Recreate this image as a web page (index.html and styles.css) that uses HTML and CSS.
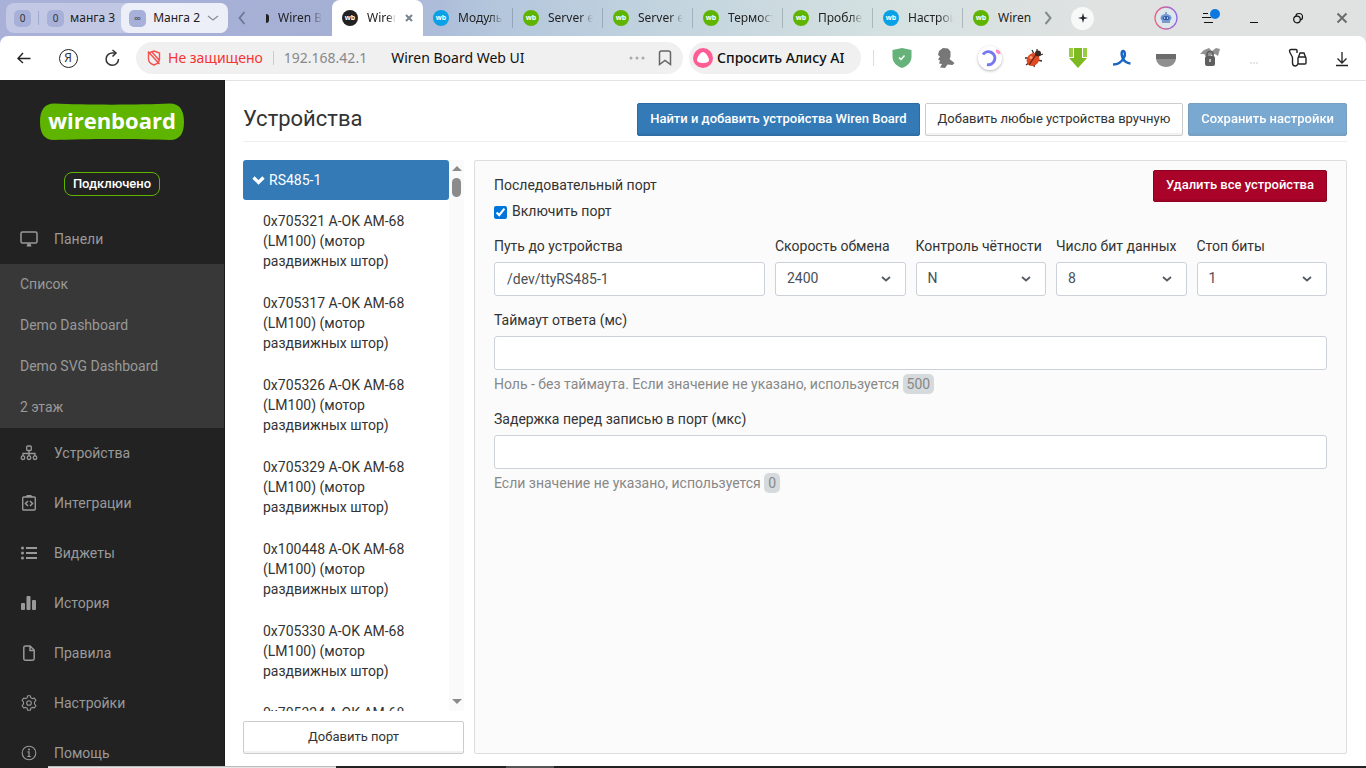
FILE: index.html
```html
<!DOCTYPE html>
<html lang="ru">
  <head>
    <meta charset="utf-8">
    <title>Wiren Board Web UI</title>
    <link rel="stylesheet" href="styles.css">
  </head>
  <body>
    <header class="browser">
      <div class="tabstrip">
        <div class="tab-groups">
          <button class="group-count" aria-label="Группа">0</button>
          <span class="group-divider"></span>
          <button class="group"><span class="group-count">0</span>манга 3</button>
          <button class="group group-open">
            <span class="group-count">∞</span>Манга 2
            <svg width="12" height="8" viewBox="0 0 12 8"><path d="M1 2l5 4 5-4" fill="none" stroke="#8b8e99" stroke-width="1.3"/></svg>
          </button>
        </div>
        <button class="strip-arrow" aria-label="Назад по вкладкам">
          <svg width="8" height="14" viewBox="0 0 8 14"><path d="M6.500 1L1.500 7l5 6" fill="none" stroke="#6e7596" stroke-width="1.8"/></svg>
        </button>
        <nav class="tabs">
          <a class="tab tab-cut" href="#"><span class="half-icon"></span><span class="tab-text">Wiren Bo</span></a>
          <a class="tab tab-active" href="#">
            <span class="wb wb-black">wb</span><span class="tab-text">Wiren</span>
            <svg width="8" height="8" viewBox="0 0 8 8"><path d="M1 1l6 6M7 1L1 7" stroke="#77838f" stroke-width="2"/></svg>
          </a>
          <a class="tab" href="#"><span class="wb wb-blue">wb</span><span class="tab-text">Модуль</span></a>
          <a class="tab" href="#"><span class="wb">wb</span><span class="tab-text">Server e</span></a>
          <a class="tab" href="#"><span class="wb">wb</span><span class="tab-text">Server e</span></a>
          <a class="tab" href="#"><span class="wb">wb</span><span class="tab-text">Термост</span></a>
          <a class="tab" href="#"><span class="wb">wb</span><span class="tab-text">Пробле</span></a>
          <a class="tab" href="#"><span class="wb wb-blue">wb</span><span class="tab-text">Настрой</span></a>
          <a class="tab tab-last" href="#"><span class="wb">wb</span><span class="tab-text">Wiren</span></a>
        </nav>
        <button class="strip-arrow" aria-label="Вперёд по вкладкам">
          <svg width="8" height="14" viewBox="0 0 8 14"><path d="M1.500 1l5 6-5 6" fill="none" stroke="#858b8d" stroke-width="2"/></svg>
        </button>
        <button class="new-tab" aria-label="Новая вкладка">
          <svg width="12" height="12" viewBox="0 0 12 12"><path d="M6 1l1.100 4L11 6 7.100 7.100 6 11 4.900 7.100 1 6l3.900-1.100z" fill="#20262b"/></svg>
        </button>
        <div class="window-buttons">
          <button class="cell" aria-label="Профиль">
            <svg width="24" height="24" viewBox="0 0 24 24">
              <defs><linearGradient id="ring"><stop offset="0" stop-color="#f0607c"/><stop offset="1" stop-color="#8f6ae8"/></linearGradient></defs>
              <circle cx="12" cy="12" r="11" fill="#dce8ec" stroke="url(#ring)" stroke-width="1.3"/>
              <path d="M11.500 6h1v3h-1z" fill="#4d608d"/>
              <ellipse cx="12" cy="12" rx="5.500" ry="4" fill="#7398d2"/>
              <ellipse cx="12" cy="12" rx="3.500" ry="2" fill="#2a5ba9"/>
              <path d="M8 15h8v2H8z" fill="#8297c5"/>
              <circle cx="10.500" cy="12" r="0.700" fill="#fff"/><circle cx="13.500" cy="12" r="0.700" fill="#fff"/>
            </svg>
          </button>
          <button class="cell" aria-label="Меню">
            <svg width="22" height="22" viewBox="0 0 22 22">
              <path d="M4 6.500h5M3 10.500h9M5 15.500h9" stroke="#111" stroke-width="1"/>
              <circle cx="16" cy="7" r="5" fill="#0a78e0"/>
            </svg>
          </button>
          <button class="cell" aria-label="Свернуть">
            <svg width="12" height="14" viewBox="0 0 12 14"><path d="M2 11.500h8" stroke="#111"/></svg>
          </button>
          <button class="cell" aria-label="Развернуть">
            <svg width="12" height="12" viewBox="0 0 12 12"><circle cx="5" cy="7.500" r="3.300" fill="none" stroke="#111" stroke-width="1.200"/><path d="M4 4c0-2 1-2.500 3-2.500 3 0 3.500 1 3.500 3.500 0 2-.500 3-2.500 3" fill="none" stroke="#111" stroke-width="1.200"/></svg>
          </button>
          <button class="cell" aria-label="Закрыть">
            <svg width="12" height="12" viewBox="0 0 12 12"><path d="M1.500 1.500l9 9M10.500 1.500l-9 9" stroke="#6b6c6c" stroke-width="2"/></svg>
          </button>
        </div>
      </div>

      <div class="toolbar">
        <button class="cell" aria-label="Назад">
          <svg width="14" height="12" viewBox="0 0 14 12"><path d="M13.500 6.500H1M6 1L1 6.500 6 11" fill="none" stroke="#222" stroke-width="1.400"/></svg>
        </button>
        <button class="cell" aria-label="Яндекс"><span class="ya">Я</span></button>
        <button class="cell" aria-label="Обновить">
          <svg width="16" height="18" viewBox="0 0 16 18"><path d="M14.500 10A6.200 6.200 0 1 1 9 4h2.500" fill="none" stroke="#333" stroke-width="1.500"/><path d="M8.500 1l3.500 3-3.500 3.500" fill="none" stroke="#333" stroke-width="1.500"/></svg>
        </button>
        <div class="address">
          <svg width="14" height="16" viewBox="0 0 14 16"><path d="M7 1l5.500 2v6c0 3-2.500 5-5.500 6-3-1-5.500-3-5.500-6V3zM1 1.500L12.500 14M5 2l7 8" fill="none" stroke="#f4504c" stroke-width="1.400"/></svg>
          <span class="insecure">Не защищено</span>
          <span class="address-divider"></span>
          <span class="host">192.168.42.1</span>
          <span class="page-name">Wiren Board Web UI</span>
          <button class="plain dots" aria-label="Ещё"><svg width="16" height="4" viewBox="0 0 16 4"><g fill="#a9a9a9"><circle cx="2" cy="2" r="1.500"/><circle cx="8" cy="2" r="1.500"/><circle cx="14" cy="2" r="1.500"/></g></svg></button>
          <button class="plain" aria-label="В закладки"><svg width="14" height="16" viewBox="0 0 14 16"><path d="M3.500 1h7c1 0 2 1 2 2v11.500L7 10.500l-5.500 4V3c0-1 1-2 2-2z" fill="none" stroke="#666" stroke-width="1.500"/></svg></button>
        </div>
        <button class="alice">
          <svg width="20" height="20" viewBox="0 0 20 20"><circle cx="10" cy="10" r="10" fill="#ff5c95"/><path d="M10 4c2.500 0 6 5.500 6 8 0 2.300-3 3-6 3s-6-.700-6-3c0-2.500 3.500-8 6-8z" fill="#fff"/></svg>
          Спросить Алису AI
        </button>
        <span class="toolbar-divider"></span>
        <div class="extensions">
          <button class="cell" aria-label="Protect">
            <svg width="20" height="20" viewBox="0 0 20 20"><path d="M10 0l9.500 2v7c0 5-4 9-9.500 11C4.500 18 .500 14 .500 9V2z" fill="#66b27a"/><path d="M7 9.500l2 2 3.500-4" fill="none" stroke="#fff" stroke-width="1.500"/></svg>
          </button>
          <button class="cell" aria-label="Расширение">
            <svg width="18" height="20" viewBox="0 0 18 20"><path d="M2 3l4-3 5 .500 2.500 3V9l-1 2 5 4-2 2-5-.500L8 20l-5-.500 2-3.500-3-.500 1-3-2-1 2-3-2-1.500z" fill="#777"/></svg>
          </button>
          <button class="cell" aria-label="Переводчик">
            <svg class="round" width="24" height="24" viewBox="0 0 24 24"><circle cx="12" cy="12" r="12" fill="#fff"/><path d="M5 8.500A6.500 6.500 0 1 1 9 18.500" fill="none" stroke="#7478f2" stroke-width="3"/><path d="M18 5c1.500 0 3 1 3.500 3" fill="none" stroke="#ff8cc4" stroke-width="3"/></svg>
          </button>
          <button class="cell" aria-label="Отладка">
            <svg width="20" height="20" viewBox="0 0 20 20"><path d="M1 10h5M2 17l4-3M8 2l2 4M13 1v5M19 6l-5 2M18 13l-5-1M10 19l1-5" stroke="#333" stroke-width="1.300"/><ellipse cx="9" cy="11.500" rx="6" ry="7" transform="rotate(40 9 11.500)" fill="#dd4b25"/><path d="M13 5L5 17" stroke="#6a1d10" stroke-width="1.200"/><circle cx="14" cy="5.500" r="3" fill="#3a2a24"/><circle cx="7" cy="9.500" r="1.500" fill="#f5a274"/></svg>
          </button>
          <button class="cell" aria-label="Скачать с сайта">
            <svg width="20" height="20" viewBox="0 0 20 20"><path d="M1 0h4v9H1zM15 0h4v9h-4z" fill="#9acb45"/><path d="M6 0h8v10h5l-9 10L1 10h5z" fill="#7db920"/></svg>
          </button>
          <button class="cell" aria-label="Лента">
            <svg width="20" height="18" viewBox="0 0 20 18"><path d="M1 15.500c6 0 9-3 11-7 1.500-3 1-6-.500-6.500-2-.300-2.500 3-1 6.500 1 3 4 6 8 6" fill="none" stroke="#1966c6" stroke-width="2.500"/></svg>
          </button>
          <button class="cell" aria-label="Pocket">
            <svg width="20" height="20" viewBox="0 0 20 20"><path d="M0 6h20v4c0 5-4.500 9-10 9S0 15 0 10z" fill="#8f8f8f"/><path d="M0 6h20v5H0z" fill="#6c6c6c"/></svg>
          </button>
          <button class="cell" aria-label="Блокировка">
            <svg width="20" height="20" viewBox="0 0 20 20"><path d="M0 6l4-4 5-2 3 3 4-3 4 1-2 7-3-2-3 1-5 3-3-4z" fill="#929292"/><rect x="5" y="8" width="10" height="10" rx="2" fill="#5f5f5f"/><path d="M7 10V6.500C7 2.500 13 2.500 13 6.500V10" fill="none" stroke="#5f5f5f" stroke-width="1.600"/><path d="M10 11v3" stroke="#ddd" stroke-width="1.500"/></svg>
          </button>
          <button class="cell" aria-label="Ещё расширения">
            <svg width="10" height="14" viewBox="0 0 10 14"><g fill="#ddd"><circle cx="2" cy="12" r="1"/><circle cx="5" cy="12" r="1"/><circle cx="8" cy="12" r="1"/></g></svg>
          </button>
          <button class="cell" aria-label="Коллекции">
            <svg width="20" height="20" viewBox="0 0 20 20"><path d="M9 5V2.500C9 2 8.500 1.500 8 1.500H3c-1 0-1.500.500-1.500 1.500 0 2 3 5 3 7v5c0 2 1 3 3 3 1.500 0 2-1 2.500-2.500" fill="none" stroke="#222" stroke-width="1.400"/><rect x="10" y="9" width="8" height="7" rx="1" fill="none" stroke="#222" stroke-width="1.400"/><path d="M10.500 9l1.500-4h4l1.500 4" fill="none" stroke="#222" stroke-width="1.400"/></svg>
          </button>
          <button class="cell" aria-label="Загрузки">
            <svg width="12" height="18" viewBox="0 0 12 18"><path d="M6 3v10.500M1.500 9.500L6 14l4.500-4.500M0 16.500h12" fill="none" stroke="#222" stroke-width="1.300"/></svg>
          </button>
        </div>
      </div>
    </header>

    <div class="app">
      <aside class="sidebar">
        <a class="logo" href="#">
          <svg width="144" height="38" viewBox="0 0 144 38" role="img" aria-label="wirenboard">
            <path d="M14 .500C45 2 99 2 130 .500c9 0 14 6 14 18.500s-5 18-14 18C99 35.500 45 35.500 14 37 5 37 0 31.500 0 19S5 .500 14 .500z" fill="#5fb400"/>
            <text class="logo-text" x="72" y="26" text-anchor="middle">wirenboard</text>
          </svg>
        </a>
        <span class="status">Подключено</span>
        <nav class="menu">
          <a class="menu-item" href="#">
            <svg width="18" height="16" viewBox="0 0 18 16"><rect x="1" y="1" width="16" height="11" rx="1.500" fill="none" stroke="#999" stroke-width="1.500"/><path d="M6.500 15.500l1-3h3l1 3z" fill="#999"/></svg>
            Панели
          </a>
          <div class="submenu">
            <a href="#">Список</a>
            <a href="#">Demo Dashboard</a>
            <a href="#">Demo SVG Dashboard</a>
            <a href="#">2 этаж</a>
          </div>
          <a class="menu-item" href="#">
            <svg width="18" height="16" viewBox="0 0 18 16"><g fill="none" stroke="#999" stroke-width="1.300"><rect x="6.700" y="1" width="4.600" height="4.500" rx="1"/><path d="M9 5.500V11M3 11V8.500h12V11"/><circle cx="3" cy="12.700" r="1.800"/><circle cx="9" cy="12.700" r="1.800"/><circle cx="15" cy="12.700" r="1.800"/></g></svg>
            Устройства
          </a>
          <a class="menu-item" href="#">
            <svg width="18" height="16" viewBox="0 0 18 16"><rect x="2.700" y="2" width="12.600" height="13" rx="1" fill="none" stroke="#999" stroke-width="1.400"/><path d="M5 2l2-2h4l2 2z" fill="#999"/><path d="M8 6L5.500 8.500 8 11M10 6l2.500 2.500L10 11" fill="none" stroke="#999" stroke-width="1.500"/></svg>
            Интеграции
          </a>
          <a class="menu-item" href="#">
            <svg width="18" height="16" viewBox="0 0 18 16"><g fill="#999"><circle cx="2.500" cy="3" r="1.500"/><circle cx="2.500" cy="8" r="1.500"/><circle cx="2.500" cy="13" r="1.500"/></g><path d="M6 3h11M6 8h11M6 13h11" stroke="#999" stroke-width="2"/></svg>
            Виджеты
          </a>
          <a class="menu-item" href="#">
            <svg width="18" height="16" viewBox="0 0 18 16"><g fill="#999"><rect x="1" y="8" width="4" height="7" rx="1"/><rect x="6.500" y="1" width="4" height="14" rx="1"/><rect x="12" y="5" width="4" height="10" rx="1"/></g></svg>
            История
          </a>
          <a class="menu-item" href="#">
            <svg width="18" height="16" viewBox="0 0 18 16"><path d="M5.500 1H10l4.200 4v8.500c0 1-.700 1.700-1.700 1.700h-7c-1 0-1.700-.700-1.700-1.700v-11C3.800 1.500 4.500 1 5.500 1zM10 1v4.500h4" fill="none" stroke="#999" stroke-width="1.500"/></svg>
            Правила
          </a>
          <a class="menu-item" href="#">
            <svg width="18" height="16" viewBox="0 0 16 16" fill="none" stroke="#999" stroke-width="1.100"><circle cx="8" cy="8" r="2.300"/><path d="M6.700.700h2.600l.500 2 1.500.900 2-.600 1.600 2.400L13.500 7v2l1.400 1.600-1.600 2.400-2-.600-1.500.900-.500 2H6.700l-.500-2-1.500-.900-2 .600-1.600-2.400L2.500 9V7L1.100 5.400 2.700 3l2 .600 1.500-.900z" stroke-linejoin="round"/></svg>
            Настройки
          </a>
          <a class="menu-item" href="#">
            <svg width="18" height="16" viewBox="0 0 18 16"><circle cx="9" cy="8" r="6.800" fill="none" stroke="#999" stroke-width="1.100"/><path d="M7.500 6.800H9v4.500M7.300 11.500h3.500" fill="none" stroke="#999" stroke-width="1.200"/><circle cx="9" cy="4.500" r="1" fill="#999"/></svg>
            Помощь
          </a>
        </nav>
      </aside>

      <main class="content">
        <div class="page-header">
          <h1>Устройства</h1>
          <div class="actions">
            <button class="btn btn-primary">Найти и добавить устройства Wiren Board</button>
            <button class="btn">Добавить любые устройства вручную</button>
            <button class="btn btn-primary" disabled>Сохранить настройки</button>
          </div>
        </div>

        <div class="columns">
          <section class="ports">
            <div class="port-scroll">
              <ul class="port-list">
                <li class="port">
                  <svg width="13" height="9" viewBox="0 0 13 9"><path d="M1.500 1.500l5 5 5-5" fill="none" stroke="#fff" stroke-width="3.200"/></svg>
                  RS485-1
                </li>
                <li>0x705321 A-OK AM-68 (LM100) (мотор раздвижных штор)</li>
                <li>0x705317 A-OK AM-68 (LM100) (мотор раздвижных штор)</li>
                <li>0x705326 A-OK AM-68 (LM100) (мотор раздвижных штор)</li>
                <li>0x705329 A-OK AM-68 (LM100) (мотор раздвижных штор)</li>
                <li>0x100448 A-OK AM-68 (LM100) (мотор раздвижных штор)</li>
                <li>0x705330 A-OK AM-68 (LM100) (мотор раздвижных штор)</li>
                <li>0x705324 A-OK AM-68</li>
              </ul>
              <div class="scrollbar">
                <svg width="10" height="5" viewBox="0 0 10 5"><path d="M0 5l5-5 5 5z" fill="#8b8b8b"/></svg>
                <span class="thumb"></span>
                <svg width="10" height="5" viewBox="0 0 10 5"><path d="M0 0l5 5 5-5z" fill="#8b8b8b"/></svg>
              </div>
            </div>
            <button class="btn">Добавить порт</button>
          </section>

          <form class="panel">
            <div class="panel-head">
              <div>
                <h2>Последовательный порт</h2>
                <label class="check"><input type="checkbox" checked>Включить порт</label>
              </div>
              <button type="button" class="btn btn-danger">Удалить все устройства</button>
            </div>

            <div class="params">
              <div class="field field-wide">
                <label for="path">Путь до устройства</label>
                <input class="control" type="text" id="path" value="/dev/ttyRS485-1">
              </div>
              <div class="field">
                <label for="baud">Скорость обмена</label>
                <div class="select">
                  <select class="control" id="baud"><option>2400</option><option>9600</option></select>
                  <svg width="10" height="6" viewBox="0 0 10 6"><path d="M1 1l4 3.500L9 1" fill="none" stroke="#555b63" stroke-width="1.800"/></svg>
                </div>
              </div>
              <div class="field">
                <label for="parity">Контроль чётности</label>
                <div class="select">
                  <select class="control" id="parity"><option>N</option><option>E</option><option>O</option></select>
                  <svg width="10" height="6" viewBox="0 0 10 6"><path d="M1 1l4 3.500L9 1" fill="none" stroke="#555b63" stroke-width="1.800"/></svg>
                </div>
              </div>
              <div class="field">
                <label for="bits">Число бит данных</label>
                <div class="select">
                  <select class="control" id="bits"><option>8</option><option>7</option></select>
                  <svg width="10" height="6" viewBox="0 0 10 6"><path d="M1 1l4 3.500L9 1" fill="none" stroke="#555b63" stroke-width="1.800"/></svg>
                </div>
              </div>
              <div class="field">
                <label for="stop">Стоп биты</label>
                <div class="select">
                  <select class="control" id="stop"><option>1</option><option>2</option></select>
                  <svg width="10" height="6" viewBox="0 0 10 6"><path d="M1 1l4 3.500L9 1" fill="none" stroke="#555b63" stroke-width="1.800"/></svg>
                </div>
              </div>
            </div>

            <div class="field">
              <label for="timeout">Таймаут ответа (мс)</label>
              <input class="control" type="text" id="timeout">
              <p class="hint">Ноль - без таймаута. Если значение не указано, используется <span class="default">500</span></p>
            </div>
            <div class="field">
              <label for="delay">Задержка перед записью в порт (мкс)</label>
              <input class="control" type="text" id="delay">
              <p class="hint">Если значение не указано, используется <span class="default">0</span></p>
            </div>
          </form>
        </div>
      </main>
    </div>

    <footer class="taskbar">
      <span class="task-start"></span>
      <span class="task-status"></span>
      <span class="task-gap"></span>
      <span class="task-app"></span>
    </footer>
  </body>
</html>
```

FILE: styles.css
```css
* {
  box-sizing: border-box;
}

body {
  margin: 0;
  height: 100vh;
  display: flex;
  flex-direction: column;
  overflow: hidden;
  font-family: Roboto, "Liberation Sans", sans-serif;
  font-size: 14px;
  line-height: 20px;
  color: #333;
  background: #fff;
}

button {
  font: inherit;
  color: inherit;
  cursor: pointer;
}

a {
  color: inherit;
  text-decoration: none;
}

svg {
  display: block;
  flex: none;
}

/* browser */

.browser {
  font-family: "Noto Sans", "Open Sans", sans-serif;
  background: linear-gradient(90deg, #a9b1d8 0, #a5b0d5 26%, #b3c6dc 36%, #c4d5df 50%, #d5e1e1 65%, #e0e2e1 82%, #e0e2e1 100%);
}

.browser button {
  border: 0;
  padding: 0;
  background: none;
}

.tabstrip {
  display: flex;
  align-items: center;
  height: 36px;
  padding: 0 2px 0 6px;
  font-size: 12px;
  line-height: 16px;
  color: #222;
}

.tab-groups {
  display: flex;
  align-items: center;
  width: 222px;
  height: 30px;
  padding-left: 8px;
  border-radius: 8px;
  background: rgba(255, 255, 255, 0.3);
}

.tabstrip .group-count {
  width: 17px;
  height: 17px;
  border-radius: 5px;
  background: #a7b0d8;
  font-size: 10px;
  text-align: center;
  color: #333;
}

.group-divider {
  width: 1px;
  height: 14px;
  margin: 0 8px 0 7px;
  background: #9daad4;
}

.group {
  display: flex;
  align-items: center;
  gap: 6px;
  height: 30px;
}

.browser .group-open {
  gap: 7px;
  margin-left: auto;
  padding: 0 9px 0 8px;
  border-radius: 8px;
  background: #eceef8;
}

.strip-arrow {
  width: 28px;
  display: flex;
  justify-content: center;
}

.tabs {
  display: flex;
  align-self: stretch;
}

.tab {
  display: flex;
  align-items: center;
  gap: 9px;
  width: 90px;
  padding: 0 10px;
  background: linear-gradient(rgba(70, 90, 110, 0.3), rgba(70, 90, 110, 0.3)) right center / 1px 20px no-repeat;
}

.tab-text {
  flex: 1;
  overflow: hidden;
  white-space: nowrap;
  -webkit-mask-image: linear-gradient(90deg, #000 70%, transparent 100%);
  mask-image: linear-gradient(90deg, #000 70%, transparent 100%);
}

.tab-cut {
  width: 76px;
  background: none;
}

.half-icon {
  width: 3px;
  height: 9px;
  border-radius: 0 5px 5px 0;
  background: #222;
}

.tab-active {
  width: 91px;
  border-radius: 8px 8px 0 0;
  background: #fff;
}

.tab-last {
  width: 71px;
  padding-right: 0;
  background: none;
}

.tab-last .tab-text {
  -webkit-mask-image: none;
  mask-image: none;
}

.wb {
  flex: none;
  width: 16px;
  height: 16px;
  border-radius: 50%;
  background: #5fb400;
  color: #fff;
  font-size: 7px;
  font-weight: 700;
  line-height: 15px;
  text-align: center;
}

.wb-blue {
  background: #0aa0e6;
}

.wb-black {
  background: #222;
}

.browser .new-tab {
  width: 23px;
  height: 23px;
  margin-left: 9px;
  display: grid;
  place-items: center;
  border-radius: 50%;
  background: #f7f8f8;
}

.window-buttons {
  display: flex;
  margin-left: auto;
}

.cell {
  width: 44px;
  height: 36px;
  display: grid;
  place-items: center;
}

.toolbar {
  display: flex;
  align-items: center;
  height: 44px;
  padding: 0 2px;
  border-radius: 8px 8px 0 0;
  background: #fff;
}

.ya {
  width: 19px;
  height: 19px;
  border: 1px solid #222;
  border-radius: 50%;
  font-size: 12px;
  line-height: 16px;
}

.address {
  flex: 1;
  display: flex;
  align-items: center;
  height: 32px;
  margin: 0 6px 0 2px;
  padding: 0 11px;
  border-radius: 16px;
  background: #f0f0f0;
  white-space: nowrap;
  color: #111;
}

.insecure {
  margin-left: 7px;
  color: #f63431;
}

.address-divider {
  width: 1px;
  height: 14px;
  margin: 0 10px;
  background: #ccc;
}

.host {
  color: #888;
}

.page-name {
  margin-left: 24px;
}

.dots {
  margin: 0 13px 0 auto;
}

.browser .alice {
  display: flex;
  align-items: center;
  gap: 4px;
  width: 172px;
  height: 32px;
  padding-left: 4px;
  border-radius: 16px;
  background: #f0f0f0;
  font-weight: 500;
  white-space: nowrap;
  color: #111;
}

.toolbar-divider {
  width: 1px;
  height: 16px;
  margin: 0 6px 0 12px;
  background: #ddd;
}

.extensions {
  display: flex;
}

.round {
  border-radius: 50%;
  box-shadow: 0 1px 3px rgba(0, 0, 0, 0.3);
}

/* app */

.app {
  flex: 1;
  display: flex;
  min-height: 0;
}

.sidebar {
  flex: none;
  width: 225px;
  overflow: hidden;
  background: #222;
  border-right: 1px solid #1a1a1a;
  color: #999;
  text-align: center;
}

.logo {
  display: flex;
  justify-content: center;
  padding: 23px 0 31px;
}

.logo-text {
  font-family: "Open Sans", sans-serif;
  font-size: 22px;
  font-weight: 700;
  fill: #fff;
}

.status {
  display: inline-block;
  padding: 1px 8px;
  border: 1px solid #5fb400;
  border-radius: 8px;
  font-size: 13px;
  font-weight: 500;
  color: #fff;
}

.menu {
  margin-top: 18px;
  text-align: left;
}

.menu-item {
  display: flex;
  align-items: center;
  gap: 16px;
  height: 50px;
  padding: 0 20px;
}

.submenu {
  background: #383838;
}

.submenu a {
  display: block;
  padding: 10px 20px 11px;
}

.content {
  flex: 1;
  min-width: 0;
  display: flex;
  flex-direction: column;
  padding: 22px 19px 12px 18px;
  border-top: 1px solid #e3e3e3;
}

.page-header {
  display: flex;
  justify-content: space-between;
  padding-bottom: 5px;
  border-bottom: 1px solid #eee;
}

h1 {
  margin: 0;
  font-size: 22px;
  font-weight: 400;
  line-height: 32px;
}

.actions {
  display: flex;
  gap: 5px;
}

.btn {
  height: 33px;
  padding: 0 12px 2px;
  border: 1px solid #ccc;
  border-radius: 2px;
  background: #fff;
  box-shadow: inset 0 -2px 0 rgba(0, 0, 0, 0.05);
  font-size: 13px;
  white-space: nowrap;
}

.btn-primary {
  border-color: #2d6ca2;
  background: #337ab7;
  font-weight: 500;
  color: #fff;
}

.btn-primary:disabled {
  opacity: 0.65;
}

.btn-danger {
  height: 32px;
  border-color: #900022;
  background: #a90329;
  font-weight: 500;
  color: #fff;
}

.columns {
  flex: 1;
  min-height: 0;
  display: flex;
  gap: 10px;
  margin-top: 18px;
}

.ports {
  flex: none;
  width: 221px;
  display: flex;
  flex-direction: column;
  gap: 10px;
}

.port-scroll {
  flex: 1;
  min-height: 0;
  display: flex;
  overflow: hidden;
}

.port-list {
  flex: 1;
  margin: 0;
  padding: 0;
  list-style: none;
}

.port-list li {
  padding: 11px 20px;
}

.port-list .port {
  display: flex;
  align-items: center;
  gap: 4px;
  height: 40px;
  padding: 0 9px;
  border-radius: 3px;
  background: #337ab7;
  color: #fff;
}

.scrollbar {
  width: 15px;
  display: flex;
  flex-direction: column;
  align-items: center;
  gap: 7px;
  padding: 6px 0 7px;
  background: #fafafa;
}

.thumb {
  width: 9px;
  height: 19px;
  margin-bottom: auto;
  border-radius: 5px;
  background: #8b8b8b;
}

.panel {
  flex: 1;
  min-width: 0;
  padding: 9px 19px 19px;
  border: 1px solid #ddd;
  border-radius: 2px;
  background: #fbfbfb;
}

.panel-head {
  display: flex;
  justify-content: space-between;
  align-items: flex-start;
  margin-bottom: 15px;
}

h2 {
  margin: 5px 0 6px;
  font-size: 14px;
  font-weight: 400;
  line-height: 20px;
}

.check {
  display: flex;
  align-items: center;
  gap: 5px;
}

.check input {
  width: 13px;
  height: 13px;
  margin: 2px 0 0;
  accent-color: #0075d9;
}

.params {
  display: grid;
  grid-template-columns: repeat(6, 1fr);
  gap: 10px;
}

.field {
  margin-bottom: 15px;
  white-space: nowrap;
}

.params .field {
  margin-bottom: 14px;
}

.field-wide {
  grid-column: span 2;
}

.field label {
  display: block;
  margin-bottom: 6px;
}

.control {
  display: block;
  width: 100%;
  height: 34px;
  padding: 0 12px;
  border: 1px solid #ccd0d9;
  border-radius: 3px;
  background: #fff;
  font: inherit;
  color: #495057;
}

.select {
  display: grid;
  align-items: center;
}

.select > * {
  grid-area: 1 / 1;
}

.select .control {
  padding: 0 11px 2px;
  appearance: none;
}

.select svg {
  justify-self: end;
  margin-right: 15px;
  pointer-events: none;
}

.hint {
  margin: 4px 0 0;
  color: #888;
}

.default {
  display: inline-block;
  padding: 0 4px;
  border-radius: 5px;
  background: #d5dbdd;
}

/* edge of the system panel under the window */

.taskbar {
  display: flex;
  height: 2px;
  background: #222;
}

.task-start {
  width: 48px;
}

.task-status {
  width: 288px;
  background: #e4e4e4;
  border-top: 1px solid #bbb;
}

.task-gap {
  width: 170px;
}

.task-app {
  width: 48px;
  background: #555;
}
```
